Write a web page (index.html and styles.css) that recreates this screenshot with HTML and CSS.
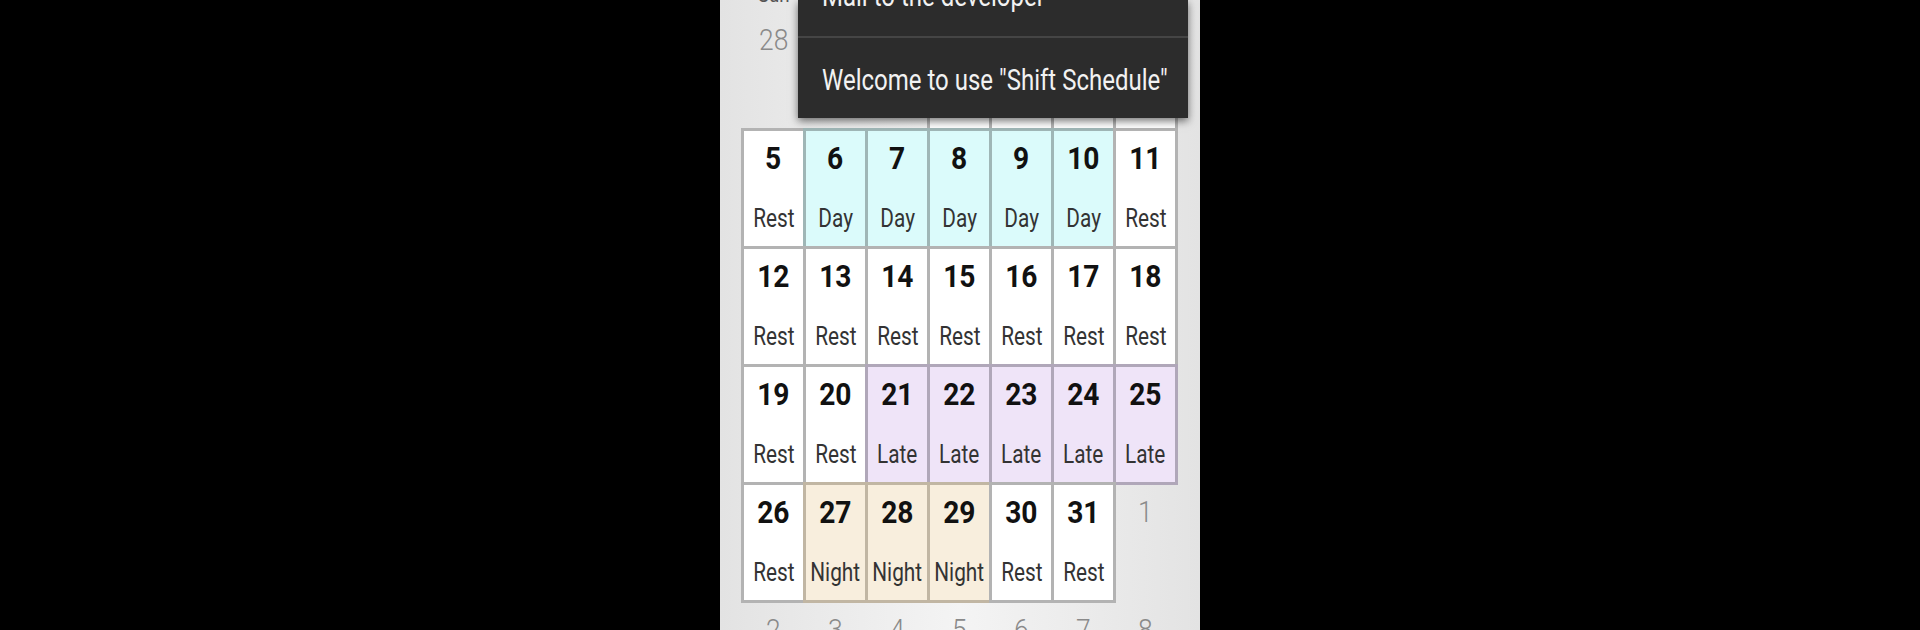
FILE: index.html
```html
<!DOCTYPE html>
<html>
<head>
<meta charset="utf-8">
<link rel="stylesheet" href="styles.css">
</head>
<body>
<div class="screen">
  <div class="weekdays">
    <span class="wd"><span class="c">Sun</span></span>
    <span class="wd"><span class="c">Mon</span></span>
    <span class="wd"><span class="c">Tue</span></span>
    <span class="wd"><span class="c">Wed</span></span>
    <span class="wd"><span class="c">Thu</span></span>
    <span class="wd"><span class="c">Fri</span></span>
    <span class="wd"><span class="c">Sat</span></span>
  </div>
  <div class="grid">
    <div class="cell other"><span class="num">28</span></div>
    <div class="cell other"><span class="num">29</span></div>
    <div class="cell other"><span class="num">30</span></div>
    <div class="cell"><span class="num">1</span><span class="lbl">Rest</span></div>
    <div class="cell"><span class="num">2</span><span class="lbl">Rest</span></div>
    <div class="cell"><span class="num">3</span><span class="lbl">Rest</span></div>
    <div class="cell"><span class="num">4</span><span class="lbl">Rest</span></div>

    <div class="cell"><span class="num">5</span><span class="lbl">Rest</span></div>
    <div class="cell day"><span class="num">6</span><span class="lbl">Day</span></div>
    <div class="cell day"><span class="num">7</span><span class="lbl">Day</span></div>
    <div class="cell day"><span class="num">8</span><span class="lbl">Day</span></div>
    <div class="cell day"><span class="num">9</span><span class="lbl">Day</span></div>
    <div class="cell day"><span class="num">10</span><span class="lbl">Day</span></div>
    <div class="cell"><span class="num">11</span><span class="lbl">Rest</span></div>

    <div class="cell"><span class="num">12</span><span class="lbl">Rest</span></div>
    <div class="cell"><span class="num">13</span><span class="lbl">Rest</span></div>
    <div class="cell"><span class="num">14</span><span class="lbl">Rest</span></div>
    <div class="cell"><span class="num">15</span><span class="lbl">Rest</span></div>
    <div class="cell"><span class="num">16</span><span class="lbl">Rest</span></div>
    <div class="cell"><span class="num">17</span><span class="lbl">Rest</span></div>
    <div class="cell"><span class="num">18</span><span class="lbl">Rest</span></div>

    <div class="cell"><span class="num">19</span><span class="lbl">Rest</span></div>
    <div class="cell"><span class="num">20</span><span class="lbl">Rest</span></div>
    <div class="cell late"><span class="num">21</span><span class="lbl">Late</span></div>
    <div class="cell late"><span class="num">22</span><span class="lbl">Late</span></div>
    <div class="cell late"><span class="num">23</span><span class="lbl">Late</span></div>
    <div class="cell late"><span class="num">24</span><span class="lbl">Late</span></div>
    <div class="cell late"><span class="num">25</span><span class="lbl">Late</span></div>

    <div class="cell"><span class="num">26</span><span class="lbl">Rest</span></div>
    <div class="cell night"><span class="num">27</span><span class="lbl">Night</span></div>
    <div class="cell night"><span class="num">28</span><span class="lbl">Night</span></div>
    <div class="cell night"><span class="num">29</span><span class="lbl">Night</span></div>
    <div class="cell"><span class="num">30</span><span class="lbl">Rest</span></div>
    <div class="cell"><span class="num">31</span><span class="lbl">Rest</span></div>
    <div class="cell other"><span class="num">1</span></div>

    <div class="cell other"><span class="num">2</span></div>
    <div class="cell other"><span class="num">3</span></div>
    <div class="cell other"><span class="num">4</span></div>
    <div class="cell other"><span class="num">5</span></div>
    <div class="cell other"><span class="num">6</span></div>
    <div class="cell other"><span class="num">7</span></div>
    <div class="cell other"><span class="num">8</span></div>
  </div>
  <div class="menu">
    <div class="item first"><span class="mt">Mail to the developer</span></div>
    <div class="divider"></div>
    <div class="item"><span class="mt">Welcome to use "Shift Schedule"</span></div>
  </div>
</div>
</body>
</html>
```

FILE: styles.css
```css
html, body {
  margin: 0;
  padding: 0;
  background: #000;
  height: 630px;
  overflow: hidden;
}
body {
  display: flex;
  justify-content: center;
  font-family: Roboto, "Noto Sans", sans-serif;
}
.screen {
  position: relative;
  width: 480px;
  height: 630px;
  overflow: hidden;
  background: linear-gradient(to right, #e3e3e3 0%, #f4f4f4 50%, #e3e3e3 100%);
  padding-left: 21px;
  box-sizing: border-box;
}
.weekdays {
  display: grid;
  grid-template-columns: repeat(7, 62px);
  height: 10px;
  padding-left: 3px;
}
.wd {
  display: flex;
  justify-content: center;
  font-size: 22px;
  line-height: 20px;
  margin-top: -15px;
  color: #555;
  width: 59px;
}
.c {
  display: inline-block;
  transform: scaleX(0.85);
}
.grid {
  display: grid;
  grid-template-columns: repeat(7, 62px);
  grid-auto-rows: 118px;
}
.cell {
  margin: 0 -3px -3px 0;
  border: 3px solid #b3b3b3;
  background: #fff;
  display: flex;
  flex-direction: column;
  align-items: center;
  padding-top: 7px;
  box-sizing: border-box;
}
.num {
  display: block;
  font-size: 32px;
  line-height: 40px;
  font-weight: 700;
  color: #111;
  transform: scaleX(0.88);
}
.lbl {
  display: block;
  margin-top: 24px;
  font-size: 26px;
  line-height: 32px;
  color: #333;
  transform: scaleX(0.8);
}
.cell.day {
  background: #dbfbfb;
  border-color: #9fb6b6;
}
.cell.late {
  background: #efe4f8;
  border-color: #b0a7b9;
}
.cell.night {
  background: #f8eedd;
  border-color: #c1b6a3;
}
.cell.other {
  background: transparent;
  border-color: transparent;
}
.cell.other .num {
  font-weight: 300;
  font-size: 30px;
  color: #8a8a8a;
}
.menu {
  position: absolute;
  left: 78px;
  top: 0;
  width: 390px;
  height: 118px;
  background: #2c2c2c;
  box-shadow: 0 3px 8px rgba(0, 0, 0, 0.55);
}
.item {
  height: 80px;
  padding: 4px 0 0 24px;
  box-sizing: border-box;
  line-height: 76px;
  font-size: 30px;
  color: #f2f2f2;
  white-space: nowrap;
}
.item.first {
  margin-top: -44px;
  padding-top: 0;
  line-height: 80px;
}
.mt {
  display: inline-block;
  transform: scaleX(0.8);
  transform-origin: left center;
}
.divider {
  height: 2px;
  background: #454545;
}
```
